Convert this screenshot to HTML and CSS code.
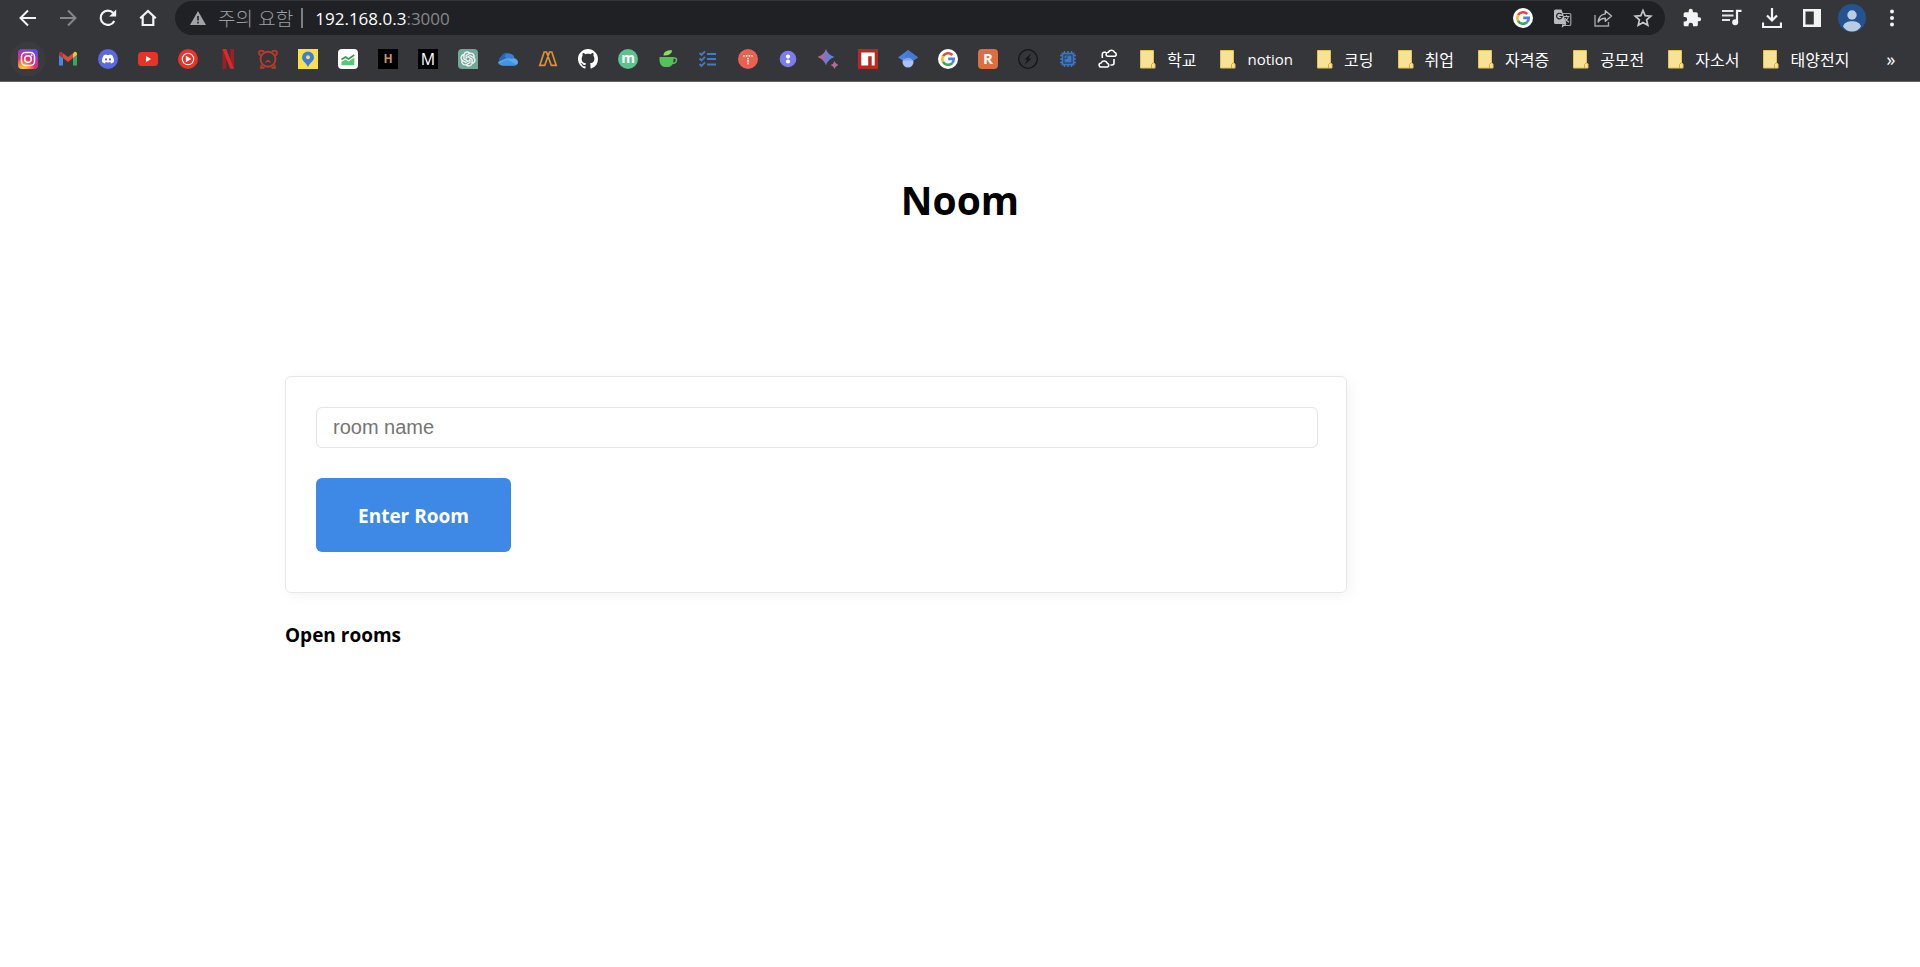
FILE: index.html
```html
<!DOCTYPE html>
<html lang="ko">
<head>
<meta charset="utf-8">
<title>Noom</title>
<link rel="stylesheet" href="styles.css">
</head>
<body>
<header class="browser">
  <div class="toolbar">
    <nav class="slots" aria-label="탐색">
      <button class="slot" aria-label="뒤로"><svg class="icon" viewBox="0 0 20 20"><path d="M18 10H3M10 2.500 2.500 10l7.500 7.500" fill="none" stroke="#f1f3f4" stroke-width="2"/></svg></button>
      <button class="slot" aria-label="앞으로"><svg class="icon" viewBox="0 0 20 20"><path d="M2 10h15M10 2.500 17.500 10 10 17.500" fill="none" stroke="#85878a" stroke-width="2"/></svg></button>
      <button class="slot" aria-label="새로고침"><svg class="icon" viewBox="0 0 20 20"><path d="M16.300 13A7.200 7.200 0 1 1 15.300 5" fill="none" stroke="#f1f3f4" stroke-width="2.200"/><path d="M18.200 1.500v7h-7z" fill="#f1f3f4"/></svg></button>
      <button class="slot" aria-label="홈"><svg class="icon" viewBox="0 0 20 20"><path d="M2.200 10.200 10 3l7.800 7.200M4.700 8.500V17h10.600V8.500" fill="none" stroke="#f1f3f4" stroke-width="2.200"/></svg></button>
    </nav>
    <div class="address">
      <svg class="warn" viewBox="0 0 16 16"><path d="M8 1 16 15H0z" fill="#a0a3a7"/><path d="M8 6v4.500M8 11.800v1.800" stroke="#202124" stroke-width="1.600"/></svg>
      <span class="notice">주의 요함</span>
      <span class="divider"></span>
      <a class="url" href="#">192.168.0.3<span class="port">:3000</span></a>
      <div class="slots slots-end">
        <button class="slot" aria-label="Google"><svg class="icon" viewBox="0 0 20 20"><use href="#google"/></svg></button>
        <button class="slot" aria-label="번역"><svg class="icon" viewBox="0 0 20 20"><path d="M9 5.500h7.500a1.300 1.300 0 0 1 1.300 1.300v9.400a1.300 1.300 0 0 1-1.300 1.300H10" fill="none" stroke="#9fa1a5" stroke-width="1.200"/><path d="M2.500 1.500h6l5 14.500H2.500A1.500 1.500 0 0 1 1 14.500V3a1.500 1.500 0 0 1 1.500-1.500z" fill="#b9bbbe"/><path d="M8.600 6.300A2.800 2.800 0 1 0 9.200 8.500H6.500" fill="none" stroke="#202124" stroke-width="1.200"/><path d="M11 8.500h5.500M13.500 7.200v1.300M15.500 8.500c-.4 2-1.700 3.700-3.300 4.800M12 10c.8 1.700 2 3 4 4.300M10 16l-.5 2.500 3.300-2.500" fill="none" stroke="#b9bbbe" stroke-width="1.100"/></svg></button>
        <button class="slot" aria-label="공유"><svg class="icon" viewBox="0 0 20 20"><path d="M2 7v11h13.500v-4" fill="none" stroke="#9fa1a5" stroke-width="1.400"/><path d="M12.300 2.800 18.500 8l-6.200 5.200v-3C9 10.200 6.800 11.300 5.200 14c.4-4.200 2.600-7.500 7.100-8.100z" fill="none" stroke="#b9bbbe" stroke-width="1.400" stroke-linejoin="round"/></svg></button>
        <button class="slot" aria-label="북마크"><svg class="icon" viewBox="0 0 20 20"><path d="m10 2.500 2.200 5.100 5.600.5-4.200 3.700 1.200 5.500-4.800-2.900-4.800 2.900 1.200-5.500-4.200-3.700 5.600-.5z" fill="none" stroke="#c4c6c9" stroke-width="1.700"/></svg></button>
      </div>
    </div>
    <div class="slots">
      <button class="slot" aria-label="확장 프로그램"><svg class="icon" viewBox="0 0 24 24"><path fill="#f1f3f4" d="M20.500 11H19V7c0-1.100-.9-2-2-2h-4V3.500a2.500 2.500 0 0 0-5 0V5H4c-1.100 0-2 .9-2 2v3.800h1.500a2.700 2.700 0 0 1 0 5.400H2V20c0 1.100.9 2 2 2h3.800v-1.500a2.700 2.700 0 0 1 5.400 0V22H17c1.100 0 2-.9 2-2v-4h1.500a2.500 2.500 0 0 0 0-5z"/></svg></button>
      <button class="slot" aria-label="미디어"><svg class="icon" viewBox="0 0 20 20"><path d="M0 3h11.500M0 7.500h11.500M0 12h8" stroke="#e4e6e8" stroke-width="1.800"/><path d="M15 14V2.800h4.500" fill="none" stroke="#f1f3f4" stroke-width="2.200"/><circle cx="13.200" cy="14.200" r="3" fill="#f1f3f4"/></svg></button>
      <button class="slot" aria-label="다운로드"><svg class="icon" viewBox="0 0 20 20"><path d="M10 0v12M5 7.500l5 5 5-5M1 14.500V19h18v-4.500" fill="none" stroke="#f1f3f4" stroke-width="2.200"/></svg></button>
      <button class="slot" aria-label="측면 패널"><svg class="icon" viewBox="0 0 20 20"><path d="M1 1h18v18H1zM3.500 3.500v13h8.300v-13z" fill="#f1f3f4" fill-rule="evenodd"/></svg></button>
      <button class="slot" aria-label="프로필"><svg class="avatar" viewBox="0 0 28 28"><circle cx="14" cy="14" r="14" fill="#24538f"/><circle cx="14" cy="11" r="4.700" fill="#b9cce6"/><path d="M5 22.500c1-4 5-5.300 9-5.300s8 1.300 9 5.300c-2 3-5 5-9 5s-7-2-9-5z" fill="#b9cce6"/></svg></button>
      <button class="slot" aria-label="메뉴"><svg class="icon" viewBox="0 0 20 20" fill="#f1f3f4"><circle cx="10" cy="3.500" r="2"/><circle cx="10" cy="10" r="2"/><circle cx="10" cy="16.500" r="2"/></svg></button>
    </div>
  </div>

  <nav class="bookmarks" aria-label="북마크바">
    <a class="slot slot-hover" href="#" aria-label="Instagram"><svg class="icon" viewBox="0 0 20 20"><defs><radialGradient id="insta" cx=".25" cy="1.050" r="1.100"><stop offset="0" stop-color="#ffd95a"/><stop offset=".3" stop-color="#fb8b35"/><stop offset=".55" stop-color="#e0306e"/><stop offset=".8" stop-color="#b532c0"/><stop offset="1" stop-color="#5b4be0"/></radialGradient></defs><rect width="20" height="20" rx="4" fill="url(#insta)"/><rect x="3.500" y="3.500" width="13" height="13" rx="4" fill="none" stroke="#fff" stroke-width="1.500"/><circle cx="10" cy="10" r="3.300" fill="none" stroke="#fff" stroke-width="1.500"/><circle cx="13.700" cy="6.200" r=".9" fill="#fff"/></svg></a>
    <a class="slot" href="#" aria-label="Gmail"><svg class="icon" viewBox="0 0 20 20"><path d="M1 6v10.500h4V9z" fill="#4a86e8"/><path d="M19 6v10.500h-4V9z" fill="#3aa757"/><path d="M15 4.500V9l4-3V4.800c0-1.800-1.800-2.500-3-1.500z" fill="#f4c23a"/><path d="M1 4.800V6l4 3V4.200L4 3.300C2.800 2.300 1 3 1 4.800z" fill="#b5382c"/><path d="M5 4.200v4.900l5 3.800 5-3.800V4.200l-5 3.800z" fill="#df4a3c"/></svg></a>
    <a class="slot" href="#" aria-label="Discord"><svg class="icon" viewBox="0 0 40 40"><circle cx="20" cy="20" r="20" fill="#5b68e3"/><path transform="translate(8 8)" fill="#fff" d="M20.317 4.370a19.791 19.791 0 00-4.885-1.515.074.074 0 00-.079.037c-.211.375-.445.865-.608 1.250-1.845-.276-3.680-.276-5.487 0-.164-.393-.406-.874-.618-1.250a.077.077 0 00-.078-.037 19.736 19.736 0 00-4.885 1.515.070.070 0 00-.032.028C.533 9.046-.319 13.580.099 18.058a.082.082 0 00.031.056c2.053 1.508 4.041 2.423 5.993 3.029a.078.078 0 00.084-.028c.462-.630.873-1.295 1.226-1.994a.076.076 0 00-.042-.106c-.653-.248-1.274-.550-1.872-.892a.077.077 0 01-.008-.128c.126-.094.252-.192.372-.291a.074.074 0 01.078-.011c3.928 1.793 8.180 1.793 12.061 0a.074.074 0 01.079.010c.120.099.246.198.373.292a.077.077 0 01-.007.128 12.299 12.299 0 01-1.873.891.077.077 0 00-.041.107c.360.698.772 1.363 1.225 1.993a.076.076 0 00.084.029c1.961-.607 3.950-1.522 6.002-3.029a.077.077 0 00.031-.055c.500-5.177-.838-9.674-3.549-13.660a.061.061 0 00-.031-.029zM8.020 15.331c-1.183 0-2.157-1.086-2.157-2.419s.956-2.419 2.157-2.419c1.211 0 2.176 1.095 2.157 2.419 0 1.333-.956 2.419-2.157 2.419zm7.975 0c-1.183 0-2.157-1.086-2.157-2.419s.956-2.419 2.157-2.419c1.211 0 2.176 1.095 2.157 2.419 0 1.333-.946 2.419-2.157 2.419z"/></svg></a>
    <a class="slot" href="#" aria-label="YouTube"><svg class="icon" viewBox="0 0 20 20"><rect y="3" width="20" height="14" rx="3.500" fill="#e83428"/><path d="m8 7 5.200 3L8 13z" fill="#fff"/></svg></a>
    <a class="slot" href="#" aria-label="YouTube Music"><svg class="icon" viewBox="0 0 20 20"><circle cx="10" cy="10" r="10" fill="#e83428"/><circle cx="10" cy="10" r="5.700" fill="none" stroke="#fff" stroke-width="1.100"/><path d="m7.900 6.800 5.400 3.200-5.400 3.200z" fill="#fff"/></svg></a>
    <a class="slot" href="#" aria-label="Netflix"><svg class="icon" viewBox="0 0 20 20"><path d="M4.500 0h3.700v19.500l-3.700.5zM12.300 0H16v20l-3.700-.5z" fill="#9c1f22"/><path d="M4.500 0h3.700L16 20l-3.800-.5z" fill="#d92b2b"/></svg></a>
    <a class="slot" href="#" aria-label="곰"><svg class="icon" viewBox="0 0 20 20" fill="none" stroke="#b93a2c" stroke-width="1.900"><path d="M5.800 3A2.500 2.500 0 1 0 2.800 6.500M14.200 3a2.500 2.500 0 1 1 3 3.500M3.800 15.800 3 18.800h3.500M16.200 15.800l.8 3h-3.500"/><circle cx="10" cy="10.200" r="7.500"/><path d="m7.500 13.500 2.500-2.200 2.500 2.200" stroke-width="1.300"/></svg></a>
    <a class="slot" href="#" aria-label="지도"><svg class="icon" viewBox="0 0 20 20"><path d="M0 0h20v20H0z" fill="#f8e04c"/><path d="M10 2.500a6 6 0 0 0-6 6c0 4 4.800 5.500 6 9.800 1.200-4.300 6-5.800 6-9.800a6 6 0 0 0-6-6z" fill="#3c7ddb"/><circle cx="10" cy="8.200" r="2" fill="#f8e04c"/></svg></a>
    <a class="slot" href="#" aria-label="증권"><svg class="icon" viewBox="0 0 20 20"><rect width="20" height="20" rx="4" fill="#fff"/><path d="m3.500 10.500 4-2.500 3 2 5.800-4" fill="none" stroke="#3b9554" stroke-width="1.600"/><path d="m3.500 12.800 4-2.300 3 2 5.800-4v7.800H3.500z" fill="#55c878"/></svg></a>
    <a class="slot" href="#" aria-label="H"><svg class="icon" viewBox="0 0 20 20"><path d="M0 0h20v20H0z" fill="#000"/><text class="glyph" x="10" y="14" font-size="12" fill="#c29463">H</text></svg></a>
    <a class="slot" href="#" aria-label="M"><svg class="icon" viewBox="0 0 20 20"><path d="M0 0h20v20H0z" fill="#000"/><text class="glyph glyph-light" x="10" y="15.500" font-size="16" fill="#fff">M</text></svg></a>
    <a class="slot" href="#" aria-label="ChatGPT"><svg class="icon" viewBox="0 0 40 40"><path d="M8 0h24q8 0 8 8v32H8q-8 0-8-8V8q0-8 8-8z" fill="#74a697"/><path transform="translate(5 5) scale(1.250)" fill="#fff" stroke="#fff" stroke-width=".5" d="M22.282 9.821a5.985 5.985 0 0 0-.516-4.911 6.046 6.046 0 0 0-6.510-2.900A6.065 6.065 0 0 0 4.981 4.182a5.985 5.985 0 0 0-3.998 2.900 6.046 6.046 0 0 0 .743 7.097 5.980 5.980 0 0 0 .511 4.911 6.051 6.051 0 0 0 6.515 2.900A5.985 5.985 0 0 0 13.260 24a6.056 6.056 0 0 0 5.772-4.206 5.989 5.989 0 0 0 3.998-2.900 6.056 6.056 0 0 0-.748-7.073zm-9.022 12.608a4.476 4.476 0 0 1-2.876-1.041l.142-.080 4.778-2.758a.795.795 0 0 0 .393-.681v-6.737l2.020 1.169a.071.071 0 0 1 .038.052v5.583a4.504 4.504 0 0 1-4.495 4.494zm-9.661-4.125a4.471 4.471 0 0 1-.535-3.014l.142.085 4.783 2.758a.771.771 0 0 0 .781 0l5.843-3.369v2.332a.080.080 0 0 1-.033.062L9.740 19.950a4.499 4.499 0 0 1-6.141-1.646zM2.341 7.896a4.485 4.485 0 0 1 2.366-1.973V11.600a.766.766 0 0 0 .388.677l5.814 3.354-2.020 1.169a.076.076 0 0 1-.071 0l-4.830-2.787A4.504 4.504 0 0 1 2.341 7.872zm16.596 3.856L13.104 8.364 15.119 7.200a.076.076 0 0 1 .071 0l4.830 2.791a4.494 4.494 0 0 1-.677 8.104v-5.677a.790.790 0 0 0-.407-.667zm2.011-3.023l-.142-.085-4.774-2.782a.776.776 0 0 0-.785 0L9.409 9.230V6.897a.066.066 0 0 1 .028-.062l4.830-2.787a4.499 4.499 0 0 1 6.680 4.660zM8.307 12.863l-2.020-1.164a.080.080 0 0 1-.038-.057V6.074a4.499 4.499 0 0 1 7.376-3.454l-.142.081L8.704 5.459a.795.795 0 0 0-.393.681zm1.098-2.365l2.602-1.500 2.607 1.500v2.999l-2.597 1.500-2.607-1.500Z"/></svg></a>
    <a class="slot" href="#" aria-label="OneDrive"><svg class="icon" viewBox="0 0 20 20"><path d="M4.500 15.500A4.500 4.500 0 0 1 3.300 7.200 6.200 6.200 0 0 1 14 6.500l2 8z" fill="#2a66b8"/><path d="M6.500 7a5.500 5.500 0 0 1 10 2.300L12 13z" fill="#397fd6"/><path d="M5 16.500c-2.800 0-4.500-1.500-5-3.500l8-3.500c3-.8 5 .8 6.500.1A4 4 0 0 1 20 13c0 2-1.500 3.500-3.500 3.500z" fill="#58a9ee"/><path d="m1 14.500 8-4 9.500 5q-1 1-2.500 1H5q-2.500 0-4-2z" fill="#4594e2"/></svg></a>
    <a class="slot" href="#" aria-label="산"><svg class="icon" viewBox="0 0 20 20" fill="none" stroke="#dc9137" stroke-width="1.700"><path d="M6.500 16.300H1.800L6.200 3h2.300l5 14M6.500 17l5-14h2.300l4.400 13.300h-4.700"/></svg></a>
    <a class="slot" href="#" aria-label="GitHub"><svg class="icon" viewBox="0 0 16 16"><path fill="#fff" d="M8 0C3.580 0 0 3.580 0 8c0 3.540 2.290 6.530 5.470 7.590.4.070.550-.170.550-.380 0-.190-.010-.820-.010-1.490-2.010.370-2.530-.490-2.690-.940-.090-.230-.480-.940-.820-1.130-.280-.150-.680-.520-.010-.530.630-.010 1.080.580 1.230.820.720 1.210 1.870.870 2.330.660.070-.520.280-.870.510-1.070-1.780-.2-3.640-.890-3.640-3.950 0-.870.310-1.590.820-2.150-.080-.2-.360-1.020.080-2.120 0 0 .670-.210 2.200.820.640-.180 1.320-.270 2-.270s1.360.090 2 .270c1.530-1.040 2.200-.820 2.200-.820.440 1.100.160 1.920.080 2.120.510.560.820 1.270.820 2.150 0 3.070-1.870 3.750-3.650 3.950.290.250.540.730.540 1.480 0 1.070-.010 1.930-.010 2.200 0 .210.150.460.550.380A8.010 8.010 0 0 0 16 8c0-4.420-3.580-8-8-8z"/></svg></a>
    <a class="slot" href="#" aria-label="m"><svg class="icon" viewBox="0 0 20 20"><circle cx="10" cy="10" r="10" fill="#5ac48c"/><text class="glyph" x="10" y="14" font-size="14" fill="#fff">m</text></svg></a>
    <a class="slot" href="#" aria-label="찻잔"><svg class="icon" viewBox="0 0 20 20"><path d="M1.500 8h14v3c0 4-2.500 7-5 7h-4c-2.500 0-5-3-5-7z" fill="#55c15a"/><path d="M15 9h1.500a2 2 0 0 1 2 2c0 2-2 3.500-4.500 3.500" fill="none" stroke="#55c15a" stroke-width="1.600"/><path d="M5.500 6.500c0-4 3.500-5.500 8.500-5.300 0 3.800-3.500 5.300-8.500 5.300z" fill="#86e05c"/></svg></a>
    <a class="slot" href="#" aria-label="할 일"><svg class="icon" viewBox="0 0 20 20" fill="none" stroke="#4679c4" stroke-width="1.900"><path d="m1.500 4 2 2L7 2.300M1.500 9.500l2 2L7 7.800M1.500 15l2 2L7 13.300M9 5h9M9 10h9M9 15.500h9"/></svg></a>
    <a class="slot" href="#" aria-label="T"><svg class="icon" viewBox="0 0 20 20"><circle cx="10" cy="10" r="10" fill="#ea6152"/><g fill="#fff"><circle cx="6" cy="6.800" r=".9"/><circle cx="8.700" cy="6.800" r=".9"/><circle cx="11.400" cy="6.800" r=".9"/><circle cx="14" cy="6.800" r=".9"/><circle cx="10" cy="9.600" r=".9"/><circle cx="10" cy="12" r=".9"/><circle cx="10" cy="14.400" r=".9"/></g></svg></a>
    <a class="slot" href="#" aria-label="점"><svg class="icon" viewBox="0 0 20 20"><circle cx="10" cy="10" r="8.300" fill="#7c7cee"/><circle cx="10" cy="7.600" r="2.100" fill="#fff"/><circle cx="10" cy="12.500" r="2.100" fill="#fff"/></svg></a>
    <a class="slot" href="#" aria-label="Bard"><svg class="icon" viewBox="0 0 20 20"><defs><linearGradient id="spark"><stop offset="0" stop-color="#d96570"/><stop offset=".5" stop-color="#7b76c9"/><stop offset="1" stop-color="#4a90e2"/></linearGradient></defs><path d="M8 0q2 6 8.500 8Q10 10 8 16.500 6 10-.5 8 6 6 8 0z" fill="url(#spark)"/><path d="M16.500 12q.8 3.100 4 4-3.200.9-4 4-.8-3.100-4-4 3.200-.9 4-4z" fill="#b66a97"/></svg></a>
    <a class="slot" href="#" aria-label="npm"><svg class="icon" viewBox="0 0 20 20"><path d="M0 0h20v20H0z" fill="#b52a24"/><path d="M3.300 3.500h13.400v13h-3V7.200h-3.500v9.300H3.300z" fill="#fff"/></svg></a>
    <a class="slot" href="#" aria-label="Google Scholar"><svg class="icon" viewBox="0 0 20 20"><path d="M10 1 0 8.500 4 11h12l4-2.500z" fill="#4a80df"/><circle cx="10" cy="13" r="5.500" fill="#a9c3f5"/><path d="M4.700 11.500a5.500 5.500 0 0 1 10.600 0z" fill="#7fa6ee"/><path d="m10 1 10 7.500-5 3.200c-2-4-8-4-10 0z" fill="#4679d6"/></svg></a>
    <a class="slot" href="#" aria-label="Google"><svg class="icon" viewBox="0 0 20 20"><g id="google"><circle cx="10" cy="10" r="10" fill="#fff"/><g fill="none" stroke-width="2.600"><path d="M5 7.200A5.800 5.800 0 0 1 14.300 6" stroke="#e14a3c"/><path d="M5 12.800A5.900 5.900 0 0 1 5 7.200" stroke="#f3bd2c"/><path d="M14 14.200A5.800 5.800 0 0 1 5 12.800" stroke="#3ea758"/><path d="M10.200 9.900h5.500c0 1.700-.5 3.200-1.800 4.300" stroke="#4a84ea"/></g></g></svg></a>
    <a class="slot" href="#" aria-label="R"><svg class="icon" viewBox="0 0 20 20"><rect width="20" height="20" rx="4" fill="#dc6e40"/><text class="glyph" x="10" y="15" font-size="15" fill="#fff">R</text></svg></a>
    <a class="slot" href="#" aria-label="번개"><svg class="icon" viewBox="0 0 20 20"><circle cx="10" cy="10" r="9.300" fill="none" stroke="#141516" stroke-width="1.300"/><path d="m13.500 4-7 6.500h3L6.500 16l7-6.500h-3z" fill="#141516"/></svg></a>
    <a class="slot" href="#" aria-label="칩"><svg class="icon" viewBox="0 0 20 20"><path d="M6.500 2v16M10 2v16M13.500 2v16M2 6.500h16M2 10h16M2 13.500h16" stroke="#3e76c6" stroke-width="1.500"/><rect x="4.500" y="4.500" width="11" height="11" fill="#35363a" stroke="#3e76c6" stroke-width="1.800"/><rect x="6.500" y="6.500" width="7" height="7" fill="#3e76c6"/><path d="M9 7v2.500H7" fill="none" stroke="#27466f"/></svg></a>
    <a class="slot" href="#" aria-label="구름"><svg class="icon" viewBox="0 0 20 20" fill="none" stroke="#fff" stroke-width="1.600" stroke-linejoin="round"><path d="M10 7.300a2 2 0 0 1 .3-4 3.500 3.500 0 0 1 6.400.2 2 2 0 0 1 .3 3.800zM3 18a2 2 0 0 1 .2-4 3.300 3.300 0 0 1 6.100.2A2 2 0 0 1 9.500 18z"/><path d="M8 3.300H6.300a2 2 0 0 0-2 2V9M12.500 16H14a2 2 0 0 0 2-2v-4"/></svg></a>

    <a class="folder" href="#"><svg class="icon" viewBox="0 0 20 20"><g id="folder"><path d="M2.500 1.500h13V14l1.500 1v4H2.500z" fill="#f8e296" stroke="#e5c14e"/><path d="M13.500 19v-3.500l2-2" fill="none" stroke="#d3aa34"/></g></svg>학교</a>
    <a class="folder latin" href="#"><svg class="icon" viewBox="0 0 20 20"><use href="#folder"/></svg>notion</a>
    <a class="folder" href="#"><svg class="icon" viewBox="0 0 20 20"><use href="#folder"/></svg>코딩</a>
    <a class="folder" href="#"><svg class="icon" viewBox="0 0 20 20"><use href="#folder"/></svg>취업</a>
    <a class="folder" href="#"><svg class="icon" viewBox="0 0 20 20"><use href="#folder"/></svg>자격증</a>
    <a class="folder" href="#"><svg class="icon" viewBox="0 0 20 20"><use href="#folder"/></svg>공모전</a>
    <a class="folder" href="#"><svg class="icon" viewBox="0 0 20 20"><use href="#folder"/></svg>자소서</a>
    <a class="folder" href="#"><svg class="icon" viewBox="0 0 20 20"><use href="#folder"/></svg>태양전지</a>
    <button class="slot more" aria-label="북마크 더보기">»</button>
  </nav>
</header>

<main class="page">
  <h1 class="title">Noom</h1>
  <form class="card">
    <input class="field" type="text" placeholder="room name" aria-label="room name">
    <button class="submit" type="button">Enter Room</button>
  </form>
  <h4 class="subtitle">Open rooms</h4>
</main>
</body>
</html>
```

FILE: styles.css
```css
* {
  box-sizing: border-box;
}

body {
  margin: 0;
  background: #fff;
  color: #000;
  font-family: "Open Sans", "Noto Sans CJK KR", sans-serif;
}

button {
  border: 0;
  padding: 0;
  background: none;
  font-family: inherit;
}

a {
  color: inherit;
  text-decoration: none;
}

/* Browser bar */
.browser {
  background: #35363a;
  border-bottom: 1px solid #6a6468;
  color: #fff;
}

.toolbar {
  display: flex;
  align-items: center;
  gap: 7px;
  height: 36px;
  padding: 0 8px;
}

.slots {
  display: flex;
}

.slots-end {
  margin-left: auto;
}

.slot {
  display: flex;
  flex: none;
  align-items: center;
  justify-content: center;
  width: 40px;
  height: 34px;
}

.slot-hover {
  background: radial-gradient(circle, #3b3b3e 17px, transparent 18px);
}

.icon {
  display: block;
  flex: none;
  width: 20px;
  height: 20px;
}

.avatar {
  width: 28px;
  height: 28px;
}

.address {
  display: flex;
  flex: 1;
  align-items: center;
  height: 34px;
  padding: 0 2px 0 15px;
  border-radius: 17px;
  background: #202124;
  font-size: 17px;
}

.warn {
  width: 16px;
  height: 16px;
}

.notice {
  margin-left: 12px;
  color: #9b9ea2;
  font-family: "Noto Sans CJK KR", sans-serif;
  font-size: 19px;
  font-weight: 300;
  line-height: 32px;
}

.divider {
  width: 2px;
  height: 20px;
  margin: 0 12px 0 8px;
  background: #7c7f83;
}

.port {
  color: #85888c;
}

.bookmarks {
  display: flex;
  align-items: center;
  height: 45px;
  padding: 0 9px 0 8px;
}

.folder {
  display: flex;
  align-items: center;
  gap: 9px;
  padding: 0 12px 0 10px;
  font-family: "Noto Sans CJK KR", sans-serif;
  font-size: 16px;
  line-height: 22px;
  white-space: nowrap;
}

.latin {
  font-family: "Open Sans", sans-serif;
  font-size: 15px;
}

.more {
  margin-left: auto;
  color: #fff;
  font-size: 18px;
}

.glyph {
  font-family: "Open Sans", sans-serif;
  font-weight: 700;
  text-anchor: middle;
}

.glyph-light {
  font-weight: 400;
}

/* Page */
.page {
  max-width: 1390px;
  margin: 0 auto;
  padding: 88px 20px 60px;
}

.title {
  margin: 0 0 146px;
  font-size: 39px;
  line-height: 60px;
  text-align: center;
}

.card {
  display: flex;
  flex-direction: column;
  align-items: flex-start;
  gap: 30px;
  max-width: 1062px;
  padding: 30px 28px 40px 30px;
  border: 1px solid #e7e7e9;
  border-radius: 6px;
  box-shadow: 3px 3px 13px #f4f4f4;
}

.field {
  width: 100%;
  padding: 8px 16px;
  border: 1px solid #e4e4e6;
  border-radius: 6px;
  background: #fff;
  font-family: "Liberation Sans", Arial, sans-serif;
  font-size: 20px;
  line-height: 23px;
}

.field::placeholder {
  color: #757575;
}

.submit {
  padding: 25px 42px 23px;
  border-radius: 6px;
  background: #3f89e6;
  color: #fff;
  font-size: 19px;
  font-weight: 700;
  line-height: 26px;
}

.subtitle {
  margin: 28px 0 0;
  font-size: 19px;
  line-height: 28px;
}
```
